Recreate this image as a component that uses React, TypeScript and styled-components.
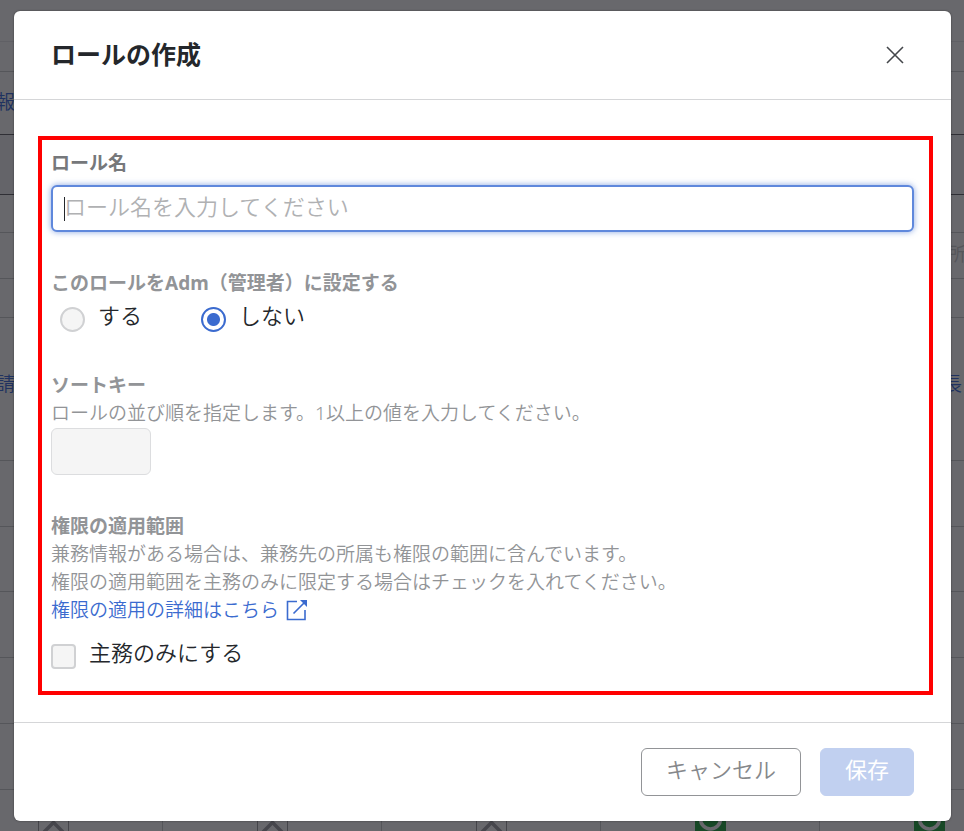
import React, { useState } from "react";
import styled, { createGlobalStyle } from "styled-components";

const blue = "#3b6bcf";
const line = "#d5d6d8";

const GlobalStyle = createGlobalStyle`
  * { box-sizing: border-box; }
  body {
    margin: 0;
    background: #ffffff;
    color: #24272b;
    font-family: "Noto Sans", "Noto Sans CJK JP", sans-serif;
    font-weight: 350;
  }
  button, input { font: inherit; }
`;

/* Page under the dialog */

const Screen = styled.div`
  position: relative;
  height: 100vh;
  overflow: hidden;
`;

const Band = styled.div<{ $height: number; $line?: string; $fill?: string; $lift?: number }>`
  display: flex;
  justify-content: space-between;
  align-items: center;
  height: ${(p) => p.$height}px;
  padding-bottom: ${(p) => p.$lift ?? 0}px;
  overflow: hidden;
  border-bottom: 1px solid ${(p) => p.$line ?? "#d0d1d3"};
  background: ${(p) => p.$fill ?? "#ffffff"};
  font-size: 19px;
  line-height: 28px;
`;

const EdgeLink = styled.a<{ $side: "left" | "right" }>`
  color: #4b78e0;
  text-decoration: none;
  margin-left: ${(p) => (p.$side === "left" ? "-4px" : "auto")};
  margin-right: ${(p) => (p.$side === "right" ? "2px" : "0")};
`;

const EdgeHint = styled.span`
  margin-left: auto;
  margin-right: -2px;
  color: #d0d1d3;
`;

const StatusTable = styled.table`
  table-layout: fixed;
  width: 1095px;
  margin-left: -56px;
  border-collapse: collapse;

  td {
    height: 60px;
    padding: 0;
    border-right: 1px solid #d0d1d3;
    text-align: center;
  }
`;

const Mark = styled.span<{ $on: boolean }>`
  display: inline-flex;
  align-items: center;
  justify-content: center;
  width: 31px;
  height: 31px;
  border: 1px solid ${(p) => (p.$on ? "#35b052" : "#a8a9ab")};
  background: ${(p) => (p.$on ? "#35b052" : "#ffffff")};
`;

/* Dialog */

const Overlay = styled.div`
  position: absolute;
  inset: 0;
  display: flex;
  padding: 11px 13px 10px 14px;
  background: rgba(3, 4, 10, 0.6);
`;

const Dialog = styled.div`
  display: flex;
  flex-direction: column;
  flex: 1;
  min-width: 0;
  border-radius: 6px;
  background: #ffffff;
  box-shadow: 0 0 2px rgba(0, 0, 0, 0.5);
`;

const Header = styled.header`
  display: flex;
  align-items: center;
  justify-content: space-between;
  padding: 24px 47px 24px 37px;
  border-bottom: 1px solid ${line};
`;

const Title = styled.h1`
  margin: 0;
  padding-bottom: 2px;
  font-size: 25px;
  line-height: 38px;
  font-weight: 700;
`;

const CloseButton = styled.button`
  display: flex;
  padding: 0;
  border: 0;
  background: none;
  color: #44474b;
`;

const Body = styled.div`
  flex: 1;
  padding: 36px 18px 27px 24px;
`;

const Frame = styled.div`
  display: flex;
  flex-direction: column;
  gap: 37px;
  padding: 9px 15px 22px 9px;
  border: 4px solid #ff0000;
`;

const Group = styled.div`
  display: flex;
  flex-direction: column;
  align-items: flex-start;
  min-width: 0;
`;

const FieldLabel = styled.label<{ $strong?: boolean }>`
  font-size: 19px;
  line-height: 28px;
  font-weight: 700;
  color: ${(p) => (p.$strong ? "#76787b" : "#929497")};
`;

const Help = styled.p`
  margin: 0;
  font-size: 19px;
  line-height: 28px;
  color: #929497;
`;

const NameInput = styled.input`
  width: 100%;
  height: 47px;
  margin-top: 8px;
  padding: 0 11px 6px;
  border: 2px solid #5f88dc;
  border-radius: 6px;
  outline: none;
  box-shadow: 0 0 6px rgba(59, 107, 207, 0.6);
  font-size: 22px;
  color: #24272b;

  &::placeholder { color: #b0b1b3; opacity: 1; }

  &:placeholder-shown {
    caret-color: transparent;
    background: linear-gradient(#24272b, #24272b) 11px 10px / 1px 24px no-repeat #ffffff;
  }
`;

const SortInput = styled.input`
  width: 100px;
  height: 47px;
  margin-top: 1px;
  padding: 0 11px;
  border: 1px solid #dcdddf;
  border-radius: 6px;
  background: #f5f5f5;
  font-size: 22px;
`;

const Options = styled.div`
  display: flex;
  gap: 59px;
  padding: 4px 9px 2px;
`;

const Choice = styled.label`
  display: flex;
  align-items: flex-start;
  gap: 13px;
  font-size: 22px;
  line-height: 28px;
`;

const Radio = styled.input`
  appearance: none;
  width: 25px;
  height: 25px;
  margin: 6px 0 0;
  border: 2px solid #d0d1d3;
  border-radius: 50%;
  background: #f5f5f5;

  &:checked {
    border-color: ${blue};
    background: radial-gradient(circle, ${blue} 6px, #ffffff 7px);
  }
`;

const Check = styled.input`
  appearance: none;
  width: 25px;
  height: 25px;
  margin: 6px 0 0;
  border: 2px solid #d0d1d3;
  border-radius: 4px;
  background: #f5f5f5;

  &:checked { background: ${blue}; border-color: ${blue}; }
`;

const CheckRow = styled.div`
  padding-top: 14px;
`;

const DetailLink = styled.a`
  display: flex;
  align-items: center;
  gap: 7px;
  font-size: 19px;
  line-height: 28px;
  color: ${blue};
  text-decoration: none;
`;

const Footer = styled.footer`
  display: flex;
  justify-content: flex-end;
  gap: 19px;
  padding: 25px 37px;
  border-top: 1px solid ${line};
`;

const Button = styled.button<{ $primary?: boolean }>`
  height: 48px;
  padding: 0 24px 8px;
  border: 1px solid ${(p) => (p.$primary ? "#c1d0f0" : "#929497")};
  border-radius: 6px;
  background: ${(p) => (p.$primary ? "#c1d0f0" : "#ffffff")};
  color: ${(p) => (p.$primary ? "#ffffff" : "#86888b")};
  font-size: 22px;
  font-weight: ${(p) => (p.$primary ? 400 : 350)};
`;

const CloseIcon = () => (
  <svg width="18" height="18" viewBox="0 0 18 18" fill="none" stroke="currentColor" strokeWidth="1.6" aria-hidden="true">
    <path d="M1 1 17 17M17 1 1 17" />
  </svg>
);

const ExternalIcon = () => (
  <svg width="22" height="22" viewBox="0 0 22 22" fill="none" stroke="currentColor" strokeWidth="1.6" aria-hidden="true">
    <path d="M11 2.5H1.5V20.5H19V11M7.5 14.5 18 4" />
    <path d="M14 1h7v7z" fill="currentColor" stroke="none" />
  </svg>
);

const ChevronIcon = () => (
  <svg width="29" height="29" viewBox="0 0 29 29" fill="none" stroke="#aaabae" strokeWidth="3.5" aria-hidden="true">
    <path d="M5 28 14.5 18.5 24 28" />
  </svg>
);

const RingIcon = () => (
  <svg width="29" height="29" viewBox="0 0 29 29" fill="none" stroke="#ffffff" strokeWidth="3.5" aria-hidden="true">
    <circle cx="14.5" cy="15" r="10" />
  </svg>
);

const marks = [false, false, false, true, true];

export default function App() {
  const [admin, setAdmin] = useState("no");

  return (
    <Screen>
      <GlobalStyle />
      <div aria-hidden="true">
        <Band $height={42} $line="#ececee" />
        <Band $height={30} />
        <Band $height={63} $line="#707175" $lift={3}>
          <EdgeLink $side="left">報</EdgeLink>
        </Band>
        <Band $height={60} $line="#707175" $fill="#f6f6f8" />
        <Band $height={38} />
        <Band $height={46} $lift={3}>
          <EdgeHint>所</EdgeHint>
        </Band>
        <Band $height={39} />
        <Band $height={143} $lift={10}>
          <EdgeLink $side="left">請</EdgeLink>
          <EdgeLink $side="right">長</EdgeLink>
        </Band>
        <Band $height={66} />
        <Band $height={65} />
        <Band $height={66} />
        <Band $height={66} />
        <Band $height={66} />
        <StatusTable>
          <tbody>
            <tr>
              {marks.map((on, i) => (
                <td key={i}>
                  <Mark $on={on}>{on ? <RingIcon /> : <ChevronIcon />}</Mark>
                </td>
              ))}
            </tr>
          </tbody>
        </StatusTable>
      </div>

      <Overlay>
        <Dialog role="dialog" aria-modal="true" aria-labelledby="dialog-title">
          <Header>
            <Title id="dialog-title">ロールの作成</Title>
            <CloseButton type="button" aria-label="閉じる">
              <CloseIcon />
            </CloseButton>
          </Header>

          <Body>
            <Frame>
              <Group>
                <FieldLabel htmlFor="role-name" $strong>ロール名</FieldLabel>
                <NameInput id="role-name" type="text" placeholder="ロール名を入力してください" autoFocus />
              </Group>

              <Group role="radiogroup" aria-labelledby="admin-label">
                <FieldLabel as="span" id="admin-label">このロールをAdm（管理者）に設定する</FieldLabel>
                <Options>
                  <Choice>
                    <Radio type="radio" name="admin" checked={admin === "yes"} onChange={() => setAdmin("yes")} />
                    <span>する</span>
                  </Choice>
                  <Choice>
                    <Radio type="radio" name="admin" checked={admin === "no"} onChange={() => setAdmin("no")} />
                    <span>しない</span>
                  </Choice>
                </Options>
              </Group>

              <Group>
                <FieldLabel htmlFor="sort-key">ソートキー</FieldLabel>
                <Help id="sort-help">ロールの並び順を指定します。1以上の値を入力してください。</Help>
                <SortInput id="sort-key" type="text" inputMode="numeric" aria-describedby="sort-help" />
              </Group>

              <Group role="group" aria-labelledby="scope-label">
                <FieldLabel as="span" id="scope-label">権限の適用範囲</FieldLabel>
                <Help>兼務情報がある場合は、兼務先の所属も権限の範囲に含んでいます。</Help>
                <Help>権限の適用範囲を主務のみに限定する場合はチェックを入れてください。</Help>
                <DetailLink href="#scope">
                  権限の適用の詳細はこちら
                  <ExternalIcon />
                </DetailLink>
                <CheckRow>
                  <Choice>
                    <Check type="checkbox" />
                    <span>主務のみにする</span>
                  </Choice>
                </CheckRow>
              </Group>
            </Frame>
          </Body>

          <Footer>
            <Button type="button">キャンセル</Button>
            <Button type="button" $primary>保存</Button>
          </Footer>
        </Dialog>
      </Overlay>
    </Screen>
  );
}
